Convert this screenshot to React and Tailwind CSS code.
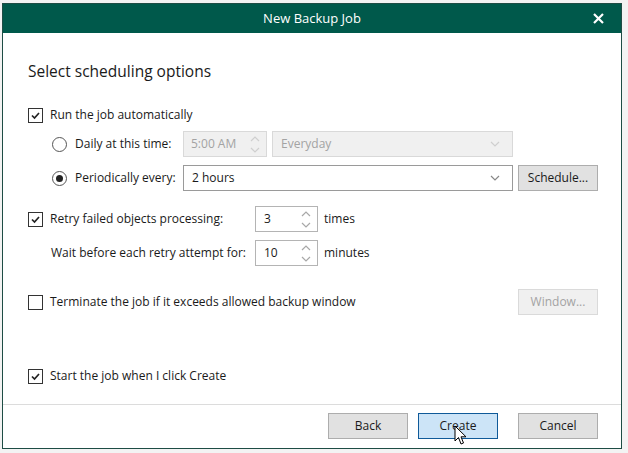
import React from 'react';

const font = { fontFamily: '"Open Sans", "Noto Sans", sans-serif' };

function Check({ checked }) {
  return (
    <div className="w-[15px] h-[15px] border border-[#333] bg-white flex items-center justify-center shrink-0">
      {checked && (
        <svg width="11" height="11" viewBox="0 0 11 11">
          <path d="M2 5.5 L4.5 8 L9 3" fill="none" stroke="#222" strokeWidth="1.7" />
        </svg>
      )}
    </div>
  );
}

function Radio({ checked }) {
  return (
    <div className="w-[15px] h-[15px] rounded-full border border-[#555] bg-white flex items-center justify-center shrink-0">
      {checked && <div className="w-[7px] h-[7px] rounded-full bg-[#222]" />}
    </div>
  );
}

function Chevron({ color }) {
  return (
    <svg width="10" height="6" viewBox="0 0 10 6">
      <path d="M1 1 L5 5 L9 1" fill="none" stroke={color} strokeWidth="1.2" />
    </svg>
  );
}

function SpinArrows({ color }) {
  return (
    <div className="flex flex-col items-center justify-center gap-[5px] w-[22px] h-full">
      <svg width="10" height="6" viewBox="0 0 10 6">
        <path d="M1 5 L5 1 L9 5" fill="none" stroke={color} strokeWidth="1.2" />
      </svg>
      <svg width="10" height="6" viewBox="0 0 10 6">
        <path d="M1 1 L5 5 L9 1" fill="none" stroke={color} strokeWidth="1.2" />
      </svg>
    </div>
  );
}

function Spin({ value }) {
  return (
    <div className="w-[63px] h-[26px] border border-[#b4b4b4] bg-white flex items-center">
      <span className="flex-1 pl-[8px]">{value}</span>
      <SpinArrows color="#a8a8a8" />
    </div>
  );
}

function Btn({ children, primary, disabled }) {
  let cls = 'bg-[#e1e1e1] border-[#adadad] text-[#1a1a1a]';
  if (primary) cls = 'bg-[#cce4f7] border-[#0f5a99] text-[#1a1a1a]';
  if (disabled) cls = 'bg-[#f0f0f0] border-[#dadada] text-[#a3a3a3]';
  return (
    <div className={`w-[80px] h-[26px] border flex items-center justify-center ${cls}`}>
      {children}
    </div>
  );
}

export default function App() {
  return (
    <div className="w-[628px] h-[453px] bg-[#f3f3f3] pt-[3px] pl-[2px] text-[12px] text-[#1a1a1a]" style={font}>
      <div className="w-[620px] h-[446px] border border-[#1e4d45] bg-white flex flex-col">
        <div className="h-[29px] bg-[#00594b] text-white flex items-center justify-center relative shrink-0">
          <span className="text-[13px]">New Backup Job</span>
          <svg className="absolute right-[17px] top-[9px]" width="11" height="11" viewBox="0 0 11 11">
            <path d="M1 1 L10 10 M10 1 L1 10" stroke="white" strokeWidth="2.2" />
          </svg>
        </div>

        <div className="flex-1 flex flex-col pl-[25px] pr-[23px]">
          <div className="mt-[27px] h-[22px] text-[15.5px] leading-[22px]">Select scheduling options</div>

          <div className="mt-[23px] h-[20px] flex items-center gap-[7px]">
            <Check checked />
            <span>Run the job automatically</span>
          </div>

          <div className="mt-[6px] h-[26px] flex items-center pl-[24px]">
            <div className="w-[131px] flex items-center gap-[8px]">
              <Radio />
              <span>Daily at this time:</span>
            </div>
            <div className="w-[84px] h-[26px] border border-[#d9d9d9] bg-[#f0f0f0] text-[#a3a3a3] flex items-center">
              <span className="flex-1 pl-[7px]">5:00 AM</span>
              <SpinArrows color="#cfcfcf" />
            </div>
            <div className="ml-[5px] w-[241px] h-[26px] border border-[#d9d9d9] bg-[#f0f0f0] text-[#a3a3a3] flex items-center justify-between pl-[8px] pr-[12px]">
              <span>Everyday</span>
              <Chevron color="#cfcfcf" />
            </div>
          </div>

          <div className="mt-[8px] h-[26px] flex items-center pl-[24px]">
            <div className="w-[131px] flex items-center gap-[8px]">
              <Radio checked />
              <span>Periodically every:</span>
            </div>
            <div className="w-[330px] h-[26px] border border-[#9a9a9a] bg-white flex items-center justify-between pl-[8px] pr-[12px]">
              <span>2 hours</span>
              <Chevron color="#888" />
            </div>
            <div className="ml-[5px]">
              <Btn>Schedule...</Btn>
            </div>
          </div>

          <div className="mt-[15px] h-[26px] flex items-center">
            <div className="w-[227px] flex items-center gap-[7px]">
              <Check checked />
              <span>Retry failed objects processing:</span>
            </div>
            <Spin value="3" />
            <span className="ml-[6px]">times</span>
          </div>

          <div className="mt-[8px] h-[26px] flex items-center">
            <div className="w-[227px] pl-[23px]">Wait before each retry attempt for:</div>
            <Spin value="10" />
            <span className="ml-[6px]">minutes</span>
          </div>

          <div className="mt-[23px] h-[26px] flex items-center justify-between">
            <div className="flex items-center gap-[7px]">
              <Check />
              <span>Terminate the job if it exceeds allowed backup window</span>
            </div>
            <Btn disabled>Window...</Btn>
          </div>

          <div className="mt-[51px] h-[20px] flex items-center gap-[7px]">
            <Check checked />
            <span>Start the job when I click Create</span>
          </div>
        </div>

        <div className="h-[44px] border-t border-[#dcdcdc] flex items-center justify-end pr-[23px] pb-[2px] shrink-0 relative">
          <Btn>Back</Btn>
          <div className="ml-[10px]">
            <Btn primary>Create</Btn>
          </div>
          <div className="ml-[20px]">
            <Btn>Cancel</Btn>
          </div>
          <svg className="absolute left-[451px] top-[20px]" width="14" height="21" viewBox="0 0 14 21">
            <path d="M1 1 L1 16 L4.5 12.5 L7 19 L9.5 18 L7 11.8 L12 11.8 Z" fill="white" stroke="black" strokeWidth="1" strokeLinejoin="round" />
          </svg>
        </div>
      </div>
    </div>
  );
}
